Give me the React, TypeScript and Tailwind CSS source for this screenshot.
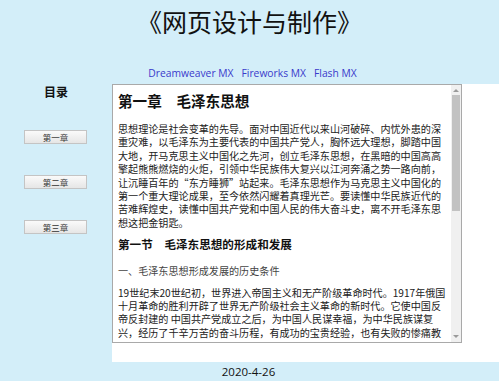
const cjk = { fontFamily: '"Noto Sans CJK SC", "Noto Sans", sans-serif' };

const para1 = [
  "思想理论是社会变革的先导。面对中国近代以来山河破碎、内忧外患的深",
  "重灾难，以毛泽东为主要代表的中国共产党人，胸怀远大理想，脚踏中国",
  "大地，开马克思主义中国化之先河，创立毛泽东思想，在黑暗的中国高高",
  "擎起熊熊燃烧的火炬，引领中华民族伟大复兴以江河奔涌之势一路向前，",
  "让沉睡百年的“东方睡狮”站起来。毛泽东思想作为马克思主义中国化的",
  "第一个重大理论成果，至今依然闪耀着真理光芒。要读懂中华民族近代的",
  "苦难辉煌史，读懂中国共产党和中国人民的伟大奋斗史，离不开毛泽东思",
  "想这把金钥匙。",
];

const para2 = [
  "19世纪末20世纪初，世界进入帝国主义和无产阶级革命时代。1917年俄国",
  "十月革命的胜利开辟了世界无产阶级社会主义革命的新时代。它使中国反",
  "帝反封建的 中国共产党成立之后，为中国人民谋幸福，为中华民族谋复",
  "兴，经历了千辛万苦的奋斗历程，有成功的宝贵经验，也有失败的惨痛教",
];

function Lines({ lines }: { lines: string[] }) {
  return (
    <div className="text-[10.1px] leading-[13.4px] text-[#222] whitespace-nowrap">
      {lines.map((l, i) => (
        <div key={i}>{l}</div>
      ))}
    </div>
  );
}

function ChapterButton({ label }: { label: string }) {
  return (
    <button className="w-[63px] h-[14px] border border-[#c4c4c4] bg-gradient-to-b from-[#fafafa] to-[#e6e6e6] text-[8.5px] leading-none text-[#333] flex items-center justify-center">
      {label}
    </button>
  );
}

function Scrollbar() {
  return (
    <div className="w-[10px] h-full bg-[#f0f0f0] flex flex-col items-center">
      <div className="h-[10px] flex items-center justify-center">
        <div className="w-0 h-0 border-l-[3px] border-r-[3px] border-b-[3px] border-l-transparent border-r-transparent border-b-[#9a9a9a]" />
      </div>
      <div className="w-[8px] h-[116px] bg-[#c2c2c2]" />
      <div className="flex-1" />
      <div className="h-[12px] flex items-center justify-center">
        <div className="w-0 h-0 border-l-[3px] border-r-[3px] border-t-[3px] border-l-transparent border-r-transparent border-t-[#9a9a9a]" />
      </div>
    </div>
  );
}

export default function App() {
  return (
    <div className="w-[499px] h-[381px] bg-[#d3eef9] flex flex-col overflow-hidden" style={cjk}>
      {/* Header */}
      <div className="h-[84px] flex flex-col items-center">
        <h1 className="mt-[6px] text-[25px] leading-[30px] text-[#111]">《网页设计与制作》</h1>
        <nav
          className="mt-[30px] ml-[6px] flex gap-[8px] text-[10.3px] leading-[14px] text-[#3a3acb]"
          style={{ fontFamily: '"Open Sans", "Noto Sans", sans-serif' }}
        >
          <a>Dreamweaver MX</a>
          <a>Fireworks MX</a>
          <a>Flash MX</a>
        </nav>
      </div>

      {/* Body */}
      <div className="flex h-[278px]">
        <div className="w-[112px] flex flex-col items-center">
          <div className="text-[12px] leading-[16px] font-bold text-[#111]">目录</div>
          <div className="mt-[30px] flex flex-col gap-[31px] pr-[1px]">
            <ChapterButton label="第一章" />
            <ChapterButton label="第二章" />
            <ChapterButton label="第三章" />
          </div>
        </div>
        <div className="flex-1 bg-white">
          <div className="w-[350px] h-[259px] border border-[#a9a9a9] flex">
            <div className="flex-1 overflow-hidden pl-[5px] pt-[7px]">
              <h2 className="text-[14.6px] leading-[18px] font-bold text-[#111]">第一章　毛泽东思想</h2>
              <div className="mt-[12px]">
                <Lines lines={para1} />
              </div>
              <h3 className="mt-[8px] text-[11.6px] leading-[15px] font-bold text-[#111]">
                第一节　毛泽东思想的形成和发展
              </h3>
              <div className="mt-[12px] text-[10.1px] leading-[13.4px] text-[#444]">
                一、毛泽东思想形成发展的历史条件
              </div>
              <div className="mt-[8px]">
                <Lines lines={para2} />
              </div>
            </div>
            <Scrollbar />
          </div>
        </div>
      </div>

      {/* Footer */}
      <div className="flex-1 flex items-center justify-center pr-[2px]">
        <span className="text-[11.5px] text-[#111]" style={{ fontFamily: '"Open Sans", "Noto Sans", sans-serif' }}>
          2020-4-26
        </span>
      </div>
    </div>
  );
}
